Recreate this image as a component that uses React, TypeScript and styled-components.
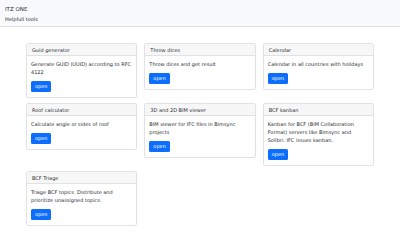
import React from "react";
import styled, { createGlobalStyle } from "styled-components";

const GlobalStyle = createGlobalStyle`
  body {
    margin: 0;
    background: #ffffff;
    color: #2b3035;
    font-family: "DejaVu Sans", "Noto Sans", sans-serif;
    font-size: 5px;
    line-height: 8px;
  }
`;

const Header = styled.header`
  background: #f8f9fa;
  border-bottom: 1px solid #dee2e6;
  padding: 5px 5px 3px;
`;

const Title = styled.div`
  font-size: 5.5px;
  line-height: 8px;
  margin-bottom: 2px;
`;

const Subtitle = styled.div`
  font-size: 5px;
  line-height: 8px;
`;

const Grid = styled.main`
  width: 348px;
  margin: 16px auto 0;
  display: grid;
  grid-template-columns: repeat(3, 1fr);
  column-gap: 7px;
  row-gap: 5px;
  align-items: start;
`;

const Card = styled.section`
  background: #ffffff;
  border: 1px solid #e2e2e2;
  border-radius: 2px;
  overflow: hidden;
`;

const CardHeader = styled.div`
  background: #f7f7f7;
  border-bottom: 1px solid #e2e2e2;
  padding: 2px 5px 1px;
  line-height: 8px;
`;

const CardBody = styled.div`
  padding: 4px 4px 5px;
`;

const Text = styled.p`
  margin: 0 0 5px;
  line-height: 8px;
`;

const OpenButton = styled.button`
  display: block;
  height: 11px;
  padding: 0 4px;
  border: none;
  border-radius: 1.5px;
  background: #0d6efd;
  color: #ffffff;
  font-family: "DejaVu Sans", sans-serif;
  font-size: 5px;
  line-height: 11px;
`;

const tools = [
  { title: "Guid generator", text: "Generate GUID (UUID) according to RFC 4122" },
  { title: "Throw dices", text: "Throw dices and get result" },
  { title: "Calendar", text: "Calendar in all countries with holidays" },
  { title: "Roof calculator", text: "Calculate angle or sides of roof" },
  { title: "3D and 2D BIM viewer", text: "BIM viewer for IFC files in Bimsync projects" },
  {
    title: "BCF kanban",
    text: "Kanban for BCF (BIM Collaboration Format) servers like Bimsync and Solibri. IFC issues kanban.",
  },
  { title: "BCF Triage", text: "Triage BCF topics. Distribute and prioritize unassigned topics." },
];

const App: React.FC = () => {
  return (
    <>
      <GlobalStyle />
      <Header>
        <Title>ITZ ONE</Title>
        <Subtitle>Helpfull tools</Subtitle>
      </Header>
      <Grid>
        {tools.map(tool => (
          <Card key={tool.title}>
            <CardHeader>{tool.title}</CardHeader>
            <CardBody>
              <Text>{tool.text}</Text>
              <OpenButton>open</OpenButton>
            </CardBody>
          </Card>
        ))}
      </Grid>
    </>
  );
};

export default App;
